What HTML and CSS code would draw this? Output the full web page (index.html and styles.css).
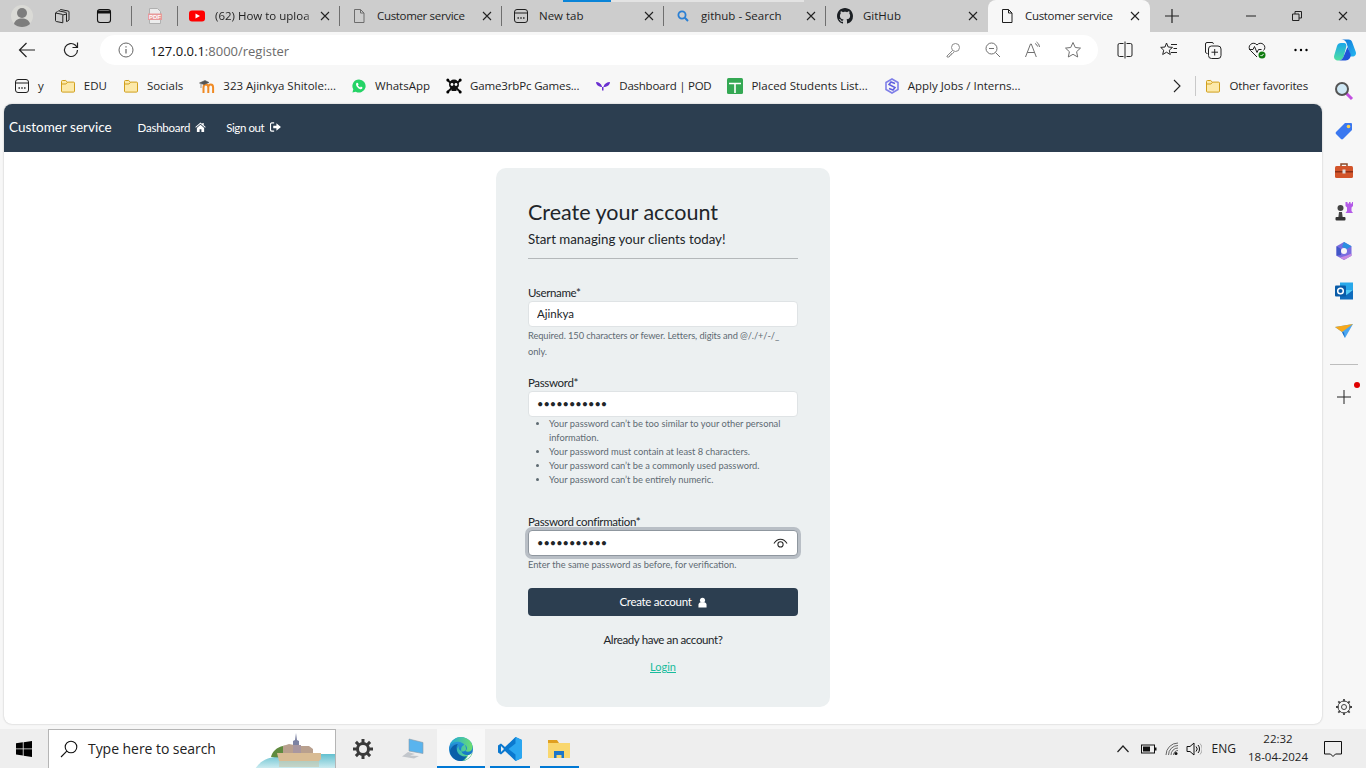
FILE: index.html
```html
<!DOCTYPE html>
<html lang="en">
<head>
<meta charset="utf-8">
<title>Customer service</title>
<link rel="stylesheet" href="styles.css">
</head>
<body>
<svg class="defs" width="0" height="0">
  <defs>
    <symbol id="i-file" viewBox="0 0 16 16"><path d="M3.500 1.500h6l3.500 3.500v9.500h-9.500zM9.500 1.500v3.500h3.500" fill="none" stroke="currentColor"/></symbol>
    <symbol id="i-newtab" viewBox="0 0 16 16"><rect x="1.500" y="1.500" width="13" height="13" rx="2.500" fill="none" stroke="currentColor"/><path d="M1.500 5h13" stroke="currentColor"/><path d="M4.500 10h1.400M7.300 10h1.400M10.100 10h1.400" stroke="currentColor" stroke-width="1.300"/></symbol>
    <symbol id="i-x" viewBox="0 0 10 10"><path d="M1 1l8 8M9 1l-8 8" stroke="currentColor" stroke-width="1.100" fill="none"/></symbol>
    <symbol id="i-folder" viewBox="0 0 16 16"><path d="M1.500 3.500a1 1 0 0 1 1-1h3.200l1.600 1.600h6.200a1 1 0 0 1 1 1v8a1 1 0 0 1-1 1h-11a1 1 0 0 1-1-1z" fill="#fce9a9" stroke="#d19f1b"/><path d="M1.500 6h4.400l1.600-1.700" fill="none" stroke="#d19f1b"/></symbol>
  </defs>
</svg>

<div class="tabstrip">
  <div class="cell cell-profile">
    <svg class="ico22" viewBox="0 0 22 22"><circle cx="11" cy="11" r="11" fill="#dadad6"/><circle cx="11" cy="8" r="5" fill="#7d7d7d"/><path d="M3 19c1-4 4-5.500 8-5.500s7 1.500 8 5.500c-2 2-5 3-8 3s-6-1-8-3z" fill="#7d7d7d"/></svg>
  </div>
  <div class="cell cell-work">
    <svg class="ico16" viewBox="0 0 16 16"><path d="M5.500 2.500l1-1 7.500 1.500a1 1 0 0 1 1 1v8l-2 1.500M3.500 3.800l1-1 7 1.500a1 1 0 0 1 1 1v8.500M1.500 5l6.500 1.300a1 1 0 0 1 .8 1v7.500L2.300 13.500a1 1 0 0 1-.8-1zM1.500 5l1.500-1.200M8.800 7l3.700-1" fill="none" stroke="#222"/></svg>
  </div>
  <div class="cell cell-tabact">
    <svg class="ico16" viewBox="0 0 16 16"><rect x="1.500" y="1.500" width="13" height="13" rx="2.500" fill="none" stroke="#111" stroke-width="1.100"/><path d="M1.500 4h13" stroke="#111" stroke-width="3"/></svg>
  </div>
  <div class="tab tab-pin">
    <svg class="ico16" viewBox="0 0 16 16"><path d="M2.500 .5h8l3 3v12h-11z" fill="#ececec" stroke="#b0b0b0"/><rect x="1" y="5.500" width="14" height="6.500" fill="#e79a9a"/><text class="pdf-text" x="8" y="10.800">PDF</text></svg>
  </div>
  <div class="tab">
    <svg class="ico16" viewBox="0 0 16 16"><rect y="2.500" width="16" height="11" rx="3" fill="#f00"/><path d="M6.500 5.500l4.500 2.500-4.500 2.500z" fill="#fff"/></svg>
    <span class="tab-title tab-fade">(62) How to uploa</span>
    <svg class="tab-x"><use href="#i-x"/></svg>
  </div>
  <div class="tab">
    <svg class="ico16 gray"><use href="#i-file"/></svg>
    <span class="tab-title tab-tight">Customer service</span>
    <svg class="tab-x"><use href="#i-x"/></svg>
  </div>
  <div class="tab">
    <svg class="ico16"><use href="#i-newtab"/></svg>
    <span class="tab-title">New tab</span>
    <svg class="tab-x"><use href="#i-x"/></svg>
  </div>
  <div class="tab">
    <svg class="ico16" viewBox="0 0 16 16"><circle cx="7" cy="7" r="3.600" fill="none" stroke="#2a7fd4" stroke-width="1.800"/><path d="M9.800 9.800l3.200 3.200" stroke="#2a7fd4" stroke-width="2"/></svg>
    <span class="tab-title">github - Search</span>
    <svg class="tab-x"><use href="#i-x"/></svg>
  </div>
  <div class="tab">
    <svg class="ico16" viewBox="0 0 16 16"><path fill="#1b1f23" d="M8 0C3.580 0 0 3.580 0 8c0 3.540 2.290 6.530 5.470 7.590.4.070.55-.17.55-.38 0-.19-.01-.82-.01-1.490-2.010.37-2.530-.49-2.690-.94-.09-.23-.48-.94-.82-1.130-.28-.15-.68-.52-.01-.53.63-.01 1.080.58 1.230.82.720 1.210 1.870.87 2.330.66.070-.52.280-.87.510-1.070-1.780-.2-3.640-.89-3.640-3.950 0-.87.310-1.590.820-2.150-.08-.2-.36-1.020.08-2.120 0 0 .67-.21 2.200.82.640-.18 1.320-.27 2-.27s1.360.09 2 .27c1.530-1.040 2.200-.82 2.200-.82.440 1.100.160 1.920.080 2.120.51.560.82 1.270.82 2.150 0 3.070-1.870 3.750-3.650 3.950.29.250.54.730.54 1.480 0 1.070-.01 1.930-.01 2.200 0 .21.150.46.550.38A8.010 8.010 0 0 0 16 8c0-4.420-3.580-8-8-8z"/></svg>
    <span class="tab-title">GitHub</span>
    <svg class="tab-x"><use href="#i-x"/></svg>
  </div>
  <div class="tab tab-active">
    <svg class="ico16"><use href="#i-file"/></svg>
    <span class="tab-title tab-tight">Customer service</span>
    <svg class="tab-x"><use href="#i-x"/></svg>
  </div>
  <div class="cell cell-plus">
    <svg class="ico16" viewBox="0 0 16 16"><path d="M8 1v14M1 8h14" stroke="#222" stroke-width="1.200"/></svg>
  </div>
  <div class="window-btns">
    <div class="win-btn"><svg class="ico10" viewBox="0 0 10 10"><path d="M0 5h10" stroke="#222"/></svg></div>
    <div class="win-btn"><svg class="ico10" viewBox="0 0 10 10"><path d="M.5 3h6.500v6.500h-6.500zM3 3V.5h6.500V7H7" fill="none" stroke="#222"/></svg></div>
    <div class="win-btn"><svg class="ico10"><use href="#i-x"/></svg></div>
  </div>
  <div class="loading-bar"></div>
</div>

<div class="toolbar">
  <div class="tool"><svg class="ico18" viewBox="0 0 18 18"><path d="M17 9H1.500M8.500 2L1.500 9l7 7" fill="none" stroke="#222" stroke-width="1.200"/></svg></div>
  <div class="tool"><svg class="ico18" viewBox="0 0 18 18"><path d="M15.500 9a6.500 6.500 0 1 1-2-4.700L15.500 6.500M15.500 1.500v5h-5" fill="none" stroke="#222" stroke-width="1.200"/></svg></div>
  <div class="address">
    <svg class="ico16 addr-info" viewBox="0 0 16 16"><circle cx="8" cy="8" r="7" fill="none" stroke="#666"/><path d="M8 7v4.500M8 4.300v1.200" stroke="#666" stroke-width="1.200"/></svg>
    <span class="url"><b class="url-host">127.0.0.1</b>:8000/register</span>
    <div class="addr-tool"><svg class="ico16" viewBox="0 0 16 16"><circle cx="10.500" cy="5.500" r="4" fill="none" stroke="#8a8a8a"/><path d="M7.500 8.500L2 14v1h2l1-1v-1h1.300v-1.300h1.200L9 10" fill="none" stroke="#8a8a8a"/></svg></div>
    <div class="addr-tool"><svg class="ico16" viewBox="0 0 16 16"><circle cx="6.500" cy="6.500" r="5.500" fill="none" stroke="#707070"/><path d="M10.500 10.500L15 15M4 6.500h5" stroke="#707070"/></svg></div>
    <div class="addr-tool"><svg class="ico18" viewBox="0 0 18 18"><path d="M1.500 16L6.500 3h.8l5 13M3.300 11.500h7" fill="none" stroke="#707070"/><path d="M11 2.500a4 4 0 0 1 2.500 3M12.500 1a6 6 0 0 1 3 5" fill="none" stroke="#707070"/></svg></div>
    <div class="addr-tool"><svg class="ico18" viewBox="0 0 18 18"><path d="M9 1.500l2.300 5 5.200.6-3.900 3.600 1.100 5.300L9 13.300 4.300 16l1.100-5.300L1.500 7.100l5.200-.6z" fill="none" stroke="#707070"/></svg></div>
  </div>
  <div class="tool"><svg class="ico18" viewBox="0 0 18 18"><path d="M7.500 2.500H3.500a1.500 1.500 0 0 0-1.500 1.500v10a1.500 1.500 0 0 0 1.500 1.500h4M10.500 2.500h4A1.500 1.500 0 0 1 16 4v10a1.500 1.500 0 0 1-1.500 1.500h-4M9 .5v17" fill="none" stroke="#222"/></svg></div>
  <div class="tool"><svg class="ico18" viewBox="0 0 18 18"><path d="M6.500 2l1.700 4 4.300.4-3.200 2.800 1 4.300-3.800-2.300-3.800 2.300 1-4.300L.7 6.400 5 6z" fill="none" stroke="#222"/><path d="M11 3.500h6M13.500 7.500h3.500M11 11.500h6" stroke="#222"/></svg></div>
  <div class="tool"><svg class="ico18" viewBox="0 0 18 18"><path d="M3.500 12.500l-1.500-.5a1 1 0 0 1-.5-1V3a1.500 1.500 0 0 1 1.500-1.500h5a1.500 1.500 0 0 1 1.500 1.300" fill="none" stroke="#222"/><rect x="4.500" y="5" width="12.500" height="12.500" rx="3" fill="none" stroke="#222"/><path d="M10.700 8v6.500M7.500 11.200H14" stroke="#222"/></svg></div>
  <div class="tool"><svg class="ico18" viewBox="0 0 18 18"><path d="M9 16L2.500 9.500a4 4 0 0 1 0-6 4.300 4.300 0 0 1 6.500.5 4.300 4.300 0 0 1 6.500-.5 4 4 0 0 1 0 6" fill="none" stroke="#222"/><path d="M1 8.500h4l1.500-3 2.500 6 1.500-3h3" fill="none" stroke="#222"/><circle cx="14" cy="14" r="3.500" fill="#107c10"/><path d="M12.500 14l1.100 1.100 2-2.200" fill="none" stroke="#fff"/></svg></div>
  <div class="tool"><svg class="ico18" viewBox="0 0 18 18"><circle cx="3.500" cy="9" r="1.200"/><circle cx="9" cy="9" r="1.200"/><circle cx="14.500" cy="9" r="1.200"/></svg></div>
  <div class="tool tool-last">
    <svg class="ico24" viewBox="0 0 24 24">
      <defs>
        <linearGradient id="cp1" x1="0" y1="0" x2="1" y2="1"><stop offset="0" stop-color="#0a6fd8"/><stop offset="1" stop-color="#28b8f0"/></linearGradient>
        <linearGradient id="cp2" x1="0" y1="0" x2="0" y2="1"><stop offset="0" stop-color="#1aa6ea"/><stop offset="1" stop-color="#4fe0a0"/></linearGradient>
      </defs>
      <path d="M8 1.500h7.500c2 0 3.300 1.300 3.800 3L22.800 14c.8 2.500-.8 4.500-3.300 4.500h-5c2 0 2.500-2 1.900-4L13.500 5C13 3.300 11 1.500 8 1.500z" fill="url(#cp1)"/>
      <path d="M8 5h3c2 0 2.800 2 2.200 4L11 17.500c-.8 3-3 5-6 5s-4.500-2.500-3.800-5L4 8c.6-2 2-3 4-3z" fill="url(#cp2)"/>
      <path d="M14.500 9l3 7c.8 3.500-1.500 6.500-5 6.500H5c3 0 5.200-2 6-5z" fill="#1f55d8"/>
    </svg>
  </div>
</div>

<div class="browser-body">
  <div class="browser-main">
    <div class="favbar">
      <div class="fav"><svg class="ico16"><use href="#i-newtab"/></svg><span>y</span></div>
      <div class="fav"><svg class="ico16"><use href="#i-folder"/></svg><span>EDU</span></div>
      <div class="fav"><svg class="ico16"><use href="#i-folder"/></svg><span>Socials</span></div>
      <div class="fav"><svg class="ico16" viewBox="0 0 16 16"><path d="M4.500 15V9.500c0-2 1-3 2.400-3s2.400 1 2.400 3V15M9.300 9.500c0-2 1-3 2.400-3s2.400 1 2.400 3V15" fill="none" stroke="#f08a24" stroke-width="2"/><path d="M.5 5L6 2.500 10 4.500 5 6.500zM2 6v4" fill="#555" stroke="#555" stroke-width=".6"/></svg><span>323 Ajinkya Shitole:...</span></div>
      <div class="fav fav-wide"><svg class="ico14" viewBox="0 0 16 16"><path d="M8 .5A7.500 7.500 0 0 0 1.500 11.800L.5 15.500l3.800-1A7.500 7.500 0 1 0 8 .5z" fill="#25d366"/><path d="M5.500 4.300c-.8.600-1.200 1.700-.6 3.100.8 1.900 2.200 3.200 4 4 1.300.5 2.400 0 3-.9l-.1-1-1.700-.8-.8.900c-1-.3-2.100-1.300-2.500-2.400l.7-.8-.7-1.800z" fill="#fff"/></svg><span>WhatsApp</span></div>
      <div class="fav"><svg class="ico16" viewBox="0 0 16 16"><path d="M1.500 2l13 12M14.500 2L1.500 14" stroke="#111" stroke-width="2"/><circle cx="1.800" cy="2" r="1.500"/><circle cx="14.200" cy="2" r="1.500"/><circle cx="1.800" cy="14" r="1.500"/><circle cx="14.200" cy="14" r="1.500"/><circle cx="8" cy="6.500" r="5" fill="#111"/><rect x="5.500" y="9.500" width="5" height="3.500" fill="#111"/><circle cx="6" cy="6.500" r="1.400" fill="#fff"/><circle cx="10" cy="6.500" r="1.400" fill="#fff"/></svg><span class="fav-narrow">Game3rbPc Games...</span></div>
      <div class="fav"><svg class="ico16" viewBox="0 0 16 16"><path d="M1 4c3 0 5 1.500 6 4.500v4H8.500v-4C9.500 5.500 12 4 15 4c0 2.500-2 4.500-5 5H6C3 8.500 1 6.500 1 4z" fill="#6a2fd0"/></svg><span class="fav-tight">Dashboard | POD</span></div>
      <div class="fav"><svg class="ico16" viewBox="0 0 16 16"><rect width="16" height="16" rx="1.500" fill="#34a853"/><path d="M2 5.500h12M8 5.500V15" stroke="#fff" stroke-width="1.600"/></svg><span>Placed Students List...</span></div>
      <div class="fav"><svg class="ico16" viewBox="0 0 16 16"><path d="M8 1l6 3.500v7L8 15l-6-3.500v-7z" fill="none" stroke="#7f7fe8" stroke-width="1.600"/><path d="M11 5.500L7 4 5 6.500l6 3L9 12 5 10.500" fill="none" stroke="#6060e0" stroke-width="1.500"/></svg><span>Apply Jobs / Interns...</span></div>
      <div class="fav-right">
        <svg class="ico-chev" viewBox="0 0 8 14"><path d="M1 1l6 6-6 6" fill="none" stroke="#222" stroke-width="1.100"/></svg>
        <div class="fav-sep"></div>
        <div class="fav"><svg class="ico16"><use href="#i-folder"/></svg><span class="fav-narrow">Other favorites</span></div>
      </div>
    </div>

    <main class="page">
      <nav class="navbar">
        <a class="brand">Customer service</a>
        <a class="nav-link">Dashboard
          <svg class="fa" viewBox="0 0 12 11"><path d="M6 .5L.3 5.500l.6.700L6 1.800l5.100 4.400.6-.7L9.500 3.600V1H8v1.300zM2 6.500V11h3V8h2v3h3V6.500L6 3z" fill="#fff"/></svg>
        </a>
        <a class="nav-link nav-signout">Sign out
          <svg class="fa" viewBox="0 0 12 11"><path d="M4.500 1H2a1.500 1.500 0 0 0-1.500 1.500v6A1.500 1.500 0 0 0 2 10h2.500" fill="none" stroke="#fff" stroke-width="1.300"/><path d="M7 1.500v2.500H3.500v3H7v2.500L12 5.500z" fill="#fff"/></svg>
        </a>
      </nav>
      <section class="card">
        <h1 class="card-title">Create your account</h1>
        <p class="card-sub">Start managing your clients today!</p>
        <hr class="card-rule">
        <form class="form">
          <label class="label">Username*</label>
          <input class="input" type="text" value="Ajinkya">
          <p class="help help-first">Required. 150 characters or fewer. Letters, digits and @/./+/-/_ only.</p>

          <label class="label label-pw">Password*</label>
          <input class="input input-pw" type="password" value="12345678901">
          <ul class="rules">
            <li>Your password can’t be too similar to your other personal information.</li>
            <li>Your password must contain at least 8 characters.</li>
            <li>Your password can’t be a commonly used password.</li>
            <li>Your password can’t be entirely numeric.</li>
          </ul>

          <label class="label label-conf">Password confirmation*</label>
          <div class="input-wrap">
            <input class="input input-pw input-focus" type="password" value="12345678901">
            <svg class="eye" viewBox="0 0 16 12"><path d="M1 6.500C3 3.500 5.500 2 8 2s5 1.500 7 4.500" fill="none" stroke="#222" stroke-width="1.100"/><circle cx="8" cy="7.500" r="2.800" fill="none" stroke="#222" stroke-width="1.100"/></svg>
          </div>
          <p class="help help-conf">Enter the same password as before, for verification.</p>

          <button class="btn" type="button">Create account
            <svg class="fa fa-user" viewBox="0 0 10 11"><circle cx="5" cy="3" r="2.800" fill="#fff"/><path d="M0.500 11V8c0-1.800 1.500-2.800 2.500-2.800h4c1 0 2.500 1 2.500 2.800v3z" fill="#fff"/></svg>
          </button>
        </form>
        <p class="already">Already have an account?</p>
        <a class="login">Login</a>
      </section>
    </main>
  </div>

  <aside class="sidebar">
    <div class="side-cell"><svg class="ico20" viewBox="0 0 20 20"><path d="M12 12l6 6" stroke="#c24fe0" stroke-width="3"/><circle cx="8" cy="8" r="6" fill="#cfe8f5" stroke="#555" stroke-width="2"/></svg></div>
    <div class="side-cell"><svg class="ico20" viewBox="0 0 20 20"><path d="M11 2h6a1 1 0 0 1 1 1v6l-9 9a1.500 1.500 0 0 1-2 0l-5-5a1.500 1.500 0 0 1 0-2z" fill="#3b78f0"/><circle cx="14.500" cy="5.500" r="1.800" fill="#ffd34d"/></svg></div>
    <div class="side-cell"><svg class="ico20" viewBox="0 0 20 20"><path d="M7 5V3h6v2" fill="none" stroke="#8a4a2a" stroke-width="1.500"/><rect x="1" y="5" width="18" height="12" rx="1.500" fill="#d2542a"/><rect x="1" y="10" width="18" height="1.500" fill="#8c3018"/><rect x="8.500" y="8.500" width="3" height="4" fill="#ddd"/></svg></div>
    <div class="side-cell"><svg class="ico20" viewBox="0 0 20 20"><path d="M12 1h1.500v1.500h1.500V1h1.500v1.500H18V1h1v4l-1.500 1.500V10L19 12H11.500l1.500-2V6.500L11.500 5V1z" fill="#b45ae8"/><circle cx="6.500" cy="7" r="3" fill="#444"/><path d="M4 19l1-8h3l1 8z" fill="#444"/><rect x="1.500" y="16" width="10" height="3.500" rx="1" fill="#333"/></svg></div>
    <div class="side-cell"><svg class="ico20" viewBox="0 0 20 20"><path d="M10 1l7.500 4.200v9.500L10 19l-7.500-4.300V5.200z" fill="#7a6de0"/><path d="M10 1l7.500 4.200-5 3L8 5.500z" fill="#2b8fe0"/><path d="M2.500 5.200L7 8v6l-4.500.7z" fill="#4257c7"/><path d="M17.500 14.700L10 19l-4-2.500 7-2 4.500-2z" fill="#c88ae0"/><circle cx="10" cy="10" r="3" fill="#f7f7f7"/></svg></div>
    <div class="side-cell"><svg class="ico20" viewBox="0 0 20 20"><rect x="6" y="1.500" width="13" height="10" fill="#28a8ea"/><path d="M6 9h13v9.500H6z" fill="#0f6cbd"/><path d="M6 9l6.500 5L19 9" fill="#50c8f5"/><rect x="1" y="4.500" width="11" height="11" rx="1" fill="#0a5ca8"/><circle cx="6.500" cy="10" r="2.800" fill="none" stroke="#fff" stroke-width="1.500"/></svg></div>
    <div class="side-cell"><svg class="ico20" viewBox="0 0 20 20"><path d="M1 6l18-3-8 14-3-6z" fill="#4ba6f0"/><path d="M1 6l7 5 11-8z" fill="#f7a81b"/><path d="M8 11l3 6-1-5.500z" fill="#1c6dc4"/></svg></div>
    <div class="side-sep"></div>
    <div class="side-cell side-plus">
      <svg class="ico14" viewBox="0 0 14 14"><path d="M7 0v14M0 7h14" stroke="#222"/></svg>
      <span class="red-dot"></span>
    </div>
    <div class="side-cell side-gear">
      <svg class="ico18" viewBox="0 0 18 18"><circle cx="9" cy="9" r="2.500" fill="none" stroke="#444"/><circle cx="9" cy="9" r="6" fill="none" stroke="#444"/><path d="M9 1v2.500M9 14.500V17M1 9h2.500M14.500 9H17M3.300 3.300l1.800 1.800M12.900 12.900l1.800 1.800M3.300 14.700l1.800-1.800M12.900 5.100l1.800-1.800" stroke="#444" stroke-width="1.800"/></svg>
    </div>
  </aside>
</div>

<footer class="taskbar">
  <div class="task-start">
    <svg class="ico16" viewBox="0 0 16 16"><path d="M0 2.300l6.800-1v6.200H0zM7.600 1.200L16 0v7.500H7.600zM0 8.300h6.800v6.300l-6.800-1zM7.600 8.300H16V16l-8.400-1.200z" fill="#000"/></svg>
  </div>
  <div class="task-search">
    <svg class="ico18" viewBox="0 0 18 18"><circle cx="11" cy="7" r="5.800" fill="none" stroke="#111" stroke-width="1.100"/><path d="M6.800 11.200L1 17" stroke="#111" stroke-width="1.100"/></svg>
    <span class="task-search-text">Type here to search</span>
    <svg class="search-art" viewBox="0 0 80 39">
      <defs><linearGradient id="sea" x1="0" y1="0" x2="0" y2="1"><stop offset="0" stop-color="#63c0cf"/><stop offset="1" stop-color="#d2eef2"/></linearGradient></defs>
      <path d="M0 39C5 31 13 27 22 27l44-3h14v15z" fill="url(#sea)"/>
      <path d="M16 27c1-5 6-10 12-11 4-1 6 2 7 6l-2 6z" fill="#5f8a3e"/>
      <path d="M22 23h44v6l-2 2H24z" fill="#d9bc94"/>
      <path d="M28 23v-7l6-2 5 1v8zM44 23v-7h10l4 3v4z" fill="#b9a08e"/>
      <path d="M38 17V11l2-1 1-7 1 7 2 1v6z" fill="#7d83a3"/>
      <path d="M38 15h8v8h-8z" fill="#a897a0"/>
      <path d="M24 31h40v6H24z" fill="#c9c5a8" opacity=".55"/>
    </svg>
  </div>
  <div class="task-app task-app-gear">
    <svg class="ico20" viewBox="0 0 20 20"><circle cx="10" cy="10" r="5.500" fill="none" stroke="#3a3a3a" stroke-width="3"/><path d="M10 0v4M10 16v4M0 10h4M16 10h4M2.900 2.900l2.800 2.800M14.300 14.300l2.800 2.800M2.900 17.100l2.800-2.800M14.300 5.700l2.800-2.800" stroke="#3a3a3a" stroke-width="3"/></svg>
  </div>
  <div class="task-app task-app-pc">
    <svg class="ico24" viewBox="0 0 24 24"><path d="M8 2l14 3.500v11L8 14z" fill="#59b4ee" stroke="#8a9aa8" stroke-width=".6"/><path d="M7 15l7 2-5 1.500 9 .5-5 2.500-12-2z" fill="#c2c6cb"/></svg>
  </div>
  <div class="task-app task-app-on task-app-edge">
    <svg class="ico24" viewBox="0 0 24 24">
      <defs>
        <linearGradient id="edge1" x1="0" y1="0" x2="0" y2="1"><stop offset="0" stop-color="#2f9fe2"/><stop offset="1" stop-color="#0c6ab8"/></linearGradient>
        <linearGradient id="edge2" x1="0" y1="0" x2="1" y2="0"><stop offset="0" stop-color="#1fa8d8"/><stop offset="1" stop-color="#6ee06e"/></linearGradient>
      </defs>
      <circle cx="12" cy="12" r="12" fill="url(#edge1)"/>
      <path d="M14 24c5-1 8-4 9.500-8-3 2.500-7 2.500-9 1-3-2-3-6-1-8 2-2 4-1 4.500 2 0 1-.5 2-1.500 3 2 1.500 6 1 7-3 .5-6-5-11-12-11C7 0 3 3 1 8c3-3 7-4 10-3 3 1 6 3 6 7 0 2-3 3-5 2-2-1-3-3-2-5-3 2-3 7 0 10 1 2 2 4 4 5z" fill="url(#edge2)"/>
      <path d="M12 24c-6 0-10-4-11-9 0-4 4-8 8-8-2 2-2 6 0 9 2 3 6 4 9 3-2 3-4 5-6 5z" fill="#0b5fa8"/>
      <path d="M23 15.500c-1 4-4 6.500-7.500 7.800 2-1.500 3.200-3.300 3.500-5 1.500 0 3-1.300 4-2.800z" fill="#f8f8f8"/>
    </svg>
  </div>
  <div class="task-app task-app-on task-app-code">
    <svg class="ico24" viewBox="0 0 24 24"><path d="M17.500 0L24 3v18l-6.500 3L7 14l-4 3.500L0 15.500v-7L3 6.500 7 10z" fill="#0a78cf"/><path d="M17.500 0L24 3v18l-6.500 3V17.500L10.500 12l7-5.500z" fill="#2aa6f0"/><path d="M3 9v6l3-3z" fill="#eee"/></svg>
  </div>
  <div class="task-app task-app-on task-app-files">
    <svg class="ico24" viewBox="0 0 24 24"><path d="M1 3h9l2 3H1z" fill="#e0a020"/><rect x="1" y="6" width="22" height="15" fill="#f9d76e"/><path d="M7 21v-7h10v7h-2.500v-3h-5v3z" fill="#1c76c9"/></svg>
  </div>
  <div class="tray">
    <svg class="tray-ico tray-chev" viewBox="0 0 12 8"><path d="M.5 7l5.500-6 5.500 6" fill="none" stroke="#222" stroke-width="1.200"/></svg>
    <svg class="tray-ico tray-batt" viewBox="0 0 16 10"><rect x=".5" y="1" width="13" height="8" fill="none" stroke="#111"/><rect x="2" y="2.500" width="7" height="5" fill="#111"/><rect x="14" y="3.500" width="1.500" height="3" fill="#111"/></svg>
    <svg class="tray-ico tray-wifi" viewBox="0 0 14 14"><path d="M1 13A12 12 0 0 1 13 1M3.500 13A9.500 9.500 0 0 1 13 3.500M6 13a7 7 0 0 1 7-7M8.500 13A4.500 4.500 0 0 1 13 8.500" fill="none" stroke="#444" stroke-width=".8"/><circle cx="11" cy="11.500" r="1.500" fill="#111"/></svg>
    <svg class="tray-ico tray-vol" viewBox="0 0 16 14"><path d="M1 4.500h3L8 1v12L4 9.500H1z" fill="none" stroke="#111"/><path d="M10 4.500a3.500 3.500 0 0 1 0 5M12 3a6 6 0 0 1 0 8" fill="none" stroke="#111"/><path d="M14 1.500a8 8 0 0 1 0 11" fill="none" stroke="#aaa"/></svg>
    <span class="tray-lang">ENG</span>
    <div class="tray-clock"><span>22:32</span><span>18-04-2024</span></div>
    <svg class="tray-ico tray-note" viewBox="0 0 18 16"><path d="M.5.500h17v12.500h-6L9 15.500 6.500 13h-6z" fill="none" stroke="#111"/></svg>
  </div>
</footer>
</body>
</html>
```

FILE: styles.css
```css
* { box-sizing: border-box; }
html, body { margin: 0; padding: 0; }
body {
  width: 1366px;
  height: 768px;
  overflow: hidden;
  background: #f7f7f7;
  font-family: "Open Sans", "Liberation Sans", sans-serif;
  color: #1f1f1f;
  display: flex;
  flex-direction: column;
}
.defs { position: absolute; }
svg { display: block; flex: none; }
.ico10 { width: 10px; height: 10px; }
.ico14 { width: 14px; height: 14px; }
.ico16 { width: 16px; height: 16px; }
.ico18 { width: 18px; height: 18px; }
.ico20 { width: 20px; height: 20px; }
.ico22 { width: 22px; height: 22px; }
.ico24 { width: 24px; height: 24px; }
.gray { color: #6d6d6d; }

/* Tab strip */
.tabstrip {
  position: relative;
  height: 32px;
  background: #cdcdcd;
  display: flex;
  align-items: center;
  flex: none;
}
.cell { display: flex; align-items: center; justify-content: center; height: 100%; }
.cell-profile { width: 44px; }
.cell-work { width: 36px; }
.cell-tabact { width: 48px; margin-right: 4px; }
.cell-plus { width: 44px; }
.tab {
  height: 32px;
  width: 162px;
  padding: 0 7px 0 11px;
  display: flex;
  align-items: center;
  gap: 10px;
  position: relative;
  flex: none;
  font-size: 11.5px;
}
.tab::before {
  content: "";
  position: absolute;
  left: -1px;
  top: 6px;
  height: 20px;
  width: 1px;
  background: #6f6f6f;
}
.tab-pin { width: 46px; padding: 0 0 0 15px; }
.tab-active {
  background: #f7f7f7;
  border-radius: 8px 8px 0 0;
}
.tab-active::before { display: none; }
.tab-title {
  flex: 1;
  min-width: 0;
  white-space: nowrap;
  padding-bottom: 2px;
}
.tab-tight { letter-spacing: -.33px; }
.tab-fade {
  margin-right: -10px;
  -webkit-mask-image: linear-gradient(to right, #000 88%, transparent 100%);
  mask-image: linear-gradient(to right, #000 88%, transparent 100%);
}
.tab-x { width: 10px; height: 10px; margin: 0 3px; color: #222; }
.pdf-text { font: 700 6px "Liberation Sans", sans-serif; fill: #fff; text-anchor: middle; }
.window-btns { display: flex; margin-left: auto; }
.win-btn { width: 46px; height: 32px; display: flex; align-items: center; justify-content: center; }
.win-btn .ico10 { color: #222; }
.loading-bar {
  position: absolute;
  left: 563px;
  top: 0;
  width: 241px;
  height: 2px;
  background: linear-gradient(to right, #0a84d8 0 48px, #e3e3e3 48px);
}

/* Toolbar */
.toolbar {
  height: 36px;
  display: flex;
  align-items: center;
  padding-left: 5px;
  flex: none;
  background: #f7f7f7;
}
.tool { width: 44px; height: 30px; display: flex; align-items: center; justify-content: center; flex: none; }
.tool-last { width: 43px; }
.address {
  width: 998px;
  height: 30px;
  margin: 0 5px 0 7px;
  background: #fff;
  border-radius: 15px;
  display: flex;
  align-items: center;
  padding: 0 5px 0 18px;
  flex: none;
}
.addr-info { margin-right: 16px; }
.url { flex: 1; font-size: 13px; color: #6b6b6b; padding-top: 1px; }
.url-host { font-weight: 400; color: #111; }
.addr-tool { width: 40px; height: 30px; display: flex; align-items: center; justify-content: center; }

/* Body */
.browser-body { flex: 1; display: flex; min-height: 0; }
.browser-main { width: 1322px; padding-left: 4px; display: flex; flex-direction: column; }
.favbar { height: 36px; display: flex; align-items: center; margin-left: 2px; margin-right: 6px; flex: none; font-size: 11.5px; color: #1f1f1f; }
.fav { display: flex; align-items: center; gap: 8px; padding: 0 8px 2px; white-space: nowrap; }
.fav svg { margin-top: 2px; }
.fav-wide { gap: 9px; }
.fav-narrow { letter-spacing: -.15px; }
.fav-tight { letter-spacing: -.25px; }
.fav-right { margin-left: auto; display: flex; align-items: center; }
.ico-chev { width: 8px; height: 14px; margin-right: 14px; }
.fav-sep { width: 1px; height: 20px; background: #c9c9c9; margin-right: 1px; }

/* Page */
.page {
  width: 1318px;
  height: 620px;
  background: #fff;
  border-radius: 8px;
  box-shadow: 0 0 2px rgba(0,0,0,.25);
  overflow: hidden;
  font-family: Lato, "Liberation Sans", sans-serif;
  flex: none;
}
.navbar {
  height: 48px;
  background: #2c3e50;
  display: flex;
  align-items: center;
  padding: 0 0 2px 5px;
  color: #fff;
}
.brand { font-size: 13.5px; margin-right: 26px; }
.nav-link { font-size: 11.5px; display: flex; align-items: center; gap: 5px; margin-right: 20px; letter-spacing: -.25px; }
.nav-signout { gap: 6px; letter-spacing: -.4px; }
.fa { width: 11px; height: 10px; }
.card {
  width: 334px;
  height: 539px;
  margin: 16px auto 0;
  background: #ecf0f1;
  border-radius: 10px;
  padding: 32px 32px 0;
  color: #212529;
}
.card-title { margin: 0; font-size: 21.5px; line-height: 25px; font-weight: 400; }
.card-sub { margin: 4px 0 0; font-size: 13.3px; line-height: 20px; }
.card-rule { margin: 9px 0 0; border: 0; height: 1px; background: #b4b8ba; }
.form { display: block; }
.label { display: block; font-size: 11.5px; line-height: 14px; margin-top: 27px; letter-spacing: -.35px; }
.label-pw { margin-top: 16px; }
.label-conf { margin-top: 28px; }
.input {
  display: block;
  width: 270px;
  height: 26px;
  margin-top: 1px;
  padding: 0 8px 2px;
  border: 1px solid #dfe3e5;
  border-radius: 4px;
  background: #fff;
  font: 11.5px Lato, sans-serif;
  color: #212529;
  outline: 0;
}
.input-pw { font-size: 11px; }
.input-wrap { position: relative; }
.input-focus { box-shadow: 0 0 0 3px #b9bfc6; border-color: #8f979f; }
.eye { position: absolute; right: 10px; top: 7px; width: 15px; height: 12px; }
.help { margin: 1px 0 0; font-size: 9.3px; line-height: 16px; color: #5e6a72; }
.help-first { letter-spacing: -.09px; }
.help-conf { margin: 2px 0 0; line-height: 14px; }
.rules { margin: 0; padding: 0 0 0 21px; font-size: 9.3px; line-height: 14px; color: #5e6a72; }
.btn {
  display: flex;
  align-items: center;
  justify-content: center;
  gap: 6px;
  width: 270px;
  height: 28px;
  margin-top: 16px;
  padding: 0 0 2px;
  background: #2c3e50;
  border: 0;
  border-radius: 4px;
  color: #fff;
  font: 11.5px Lato, sans-serif;
  letter-spacing: -.3px;
}
.fa-user { width: 9px; height: 11px; margin-top: 2px; }
.already { margin: 17px 0 0; font-size: 11.5px; line-height: 14px; text-align: center; letter-spacing: -.38px; }
.login { display: block; margin-top: 13px; font-size: 11px; line-height: 14px; text-align: center; color: #18bc9c; text-decoration: underline; }

/* Sidebar */
.sidebar { width: 44px; display: flex; flex-direction: column; align-items: center; padding-top: 3px; }
.side-cell { width: 44px; height: 40px; display: flex; align-items: center; justify-content: center; flex: none; }
.side-sep { width: 28px; height: 1px; background: #bdbdbd; margin: 13px 0 12px; flex: none; }
.side-plus { position: relative; }
.red-dot { position: absolute; left: 32px; top: 5px; width: 6px; height: 6px; border-radius: 50%; background: #e00000; }
.side-gear { margin-top: auto; margin-bottom: 2px; }

/* Taskbar */
.taskbar {
  height: 39px;
  flex: none;
  background: #eeeeee;
  display: flex;
  align-items: center;
  font-size: 14px;
}
.task-start { width: 48px; display: flex; justify-content: center; }
.task-search {
  width: 288px;
  height: 39px;
  background: #fff;
  border: 1px solid #b5b5b5;
  border-bottom: 0;
  padding-left: 11px;
  display: flex;
  align-items: center;
  gap: 10px;
  position: relative;
  overflow: hidden;
}
.task-search-text { font-size: 14px; color: #222; padding-bottom: 2px; letter-spacing: -.05px; }
.search-art { position: absolute; right: 0; top: 0; width: 80px; height: 39px; }
.task-app { height: 39px; width: 49px; display: flex; align-items: center; justify-content: center; flex: none; position: relative; }
.task-app-gear { margin-left: 2px; }
.task-app-pc { margin-left: 1px; }
.task-app-edge { background: #f8f8f8; width: 48px; }
.task-app-on::after { content: ""; position: absolute; left: 5px; right: 4px; bottom: 0; height: 2px; background: #0078d4; }
.task-app-edge::after { left: 0; right: 0; }
.task-app-files::after { left: 6px; right: 4px; }
.tray { margin-left: auto; display: flex; align-items: center; height: 100%; }
.tray-ico { flex: none; }
.tray-chev { width: 12px; height: 8px; margin-right: 12px; }
.tray-batt { width: 16px; height: 10px; margin-right: 8px; }
.tray-wifi { width: 14px; height: 14px; margin-right: 7px; }
.tray-vol { width: 16px; height: 14px; margin-right: 10px; }
.tray-lang { font-size: 12px; margin-right: 12px; }
.tray-clock { display: flex; flex-direction: column; align-items: center; font-size: 11.5px; line-height: 18px; margin-right: 16px; width: 60px; padding-bottom: 2px; }
.tray-note { width: 18px; height: 16px; margin-right: 24px; }
```
